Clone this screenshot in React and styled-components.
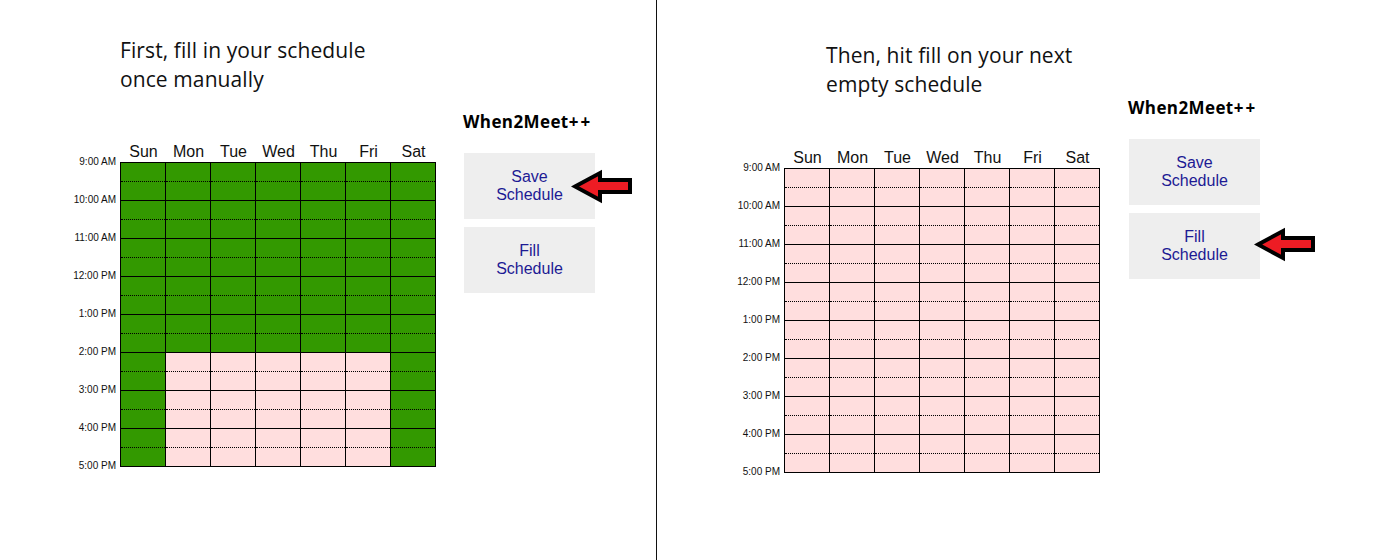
import React from "react";
import styled, { createGlobalStyle } from "styled-components";

const GlobalStyle = createGlobalStyle`
  html, body {
    margin: 0;
    padding: 0;
    background: #ffffff;
  }
  body {
    font-family: "Liberation Sans", Arial, sans-serif;
  }
`;

const Page = styled.div`
  display: flex;
  width: 1400px;
  height: 560px;
  overflow: hidden;
  background: #fff;
`;

const Half = styled.div`
  display: flex;
  align-items: flex-start;
  box-sizing: border-box;
  width: ${props => props.$width};
  flex-shrink: 0;
  padding-top: ${props => props.$top}px;
  padding-left: ${props => props.$left}px;
  border-right: ${props => (props.$divider ? "1px solid #111" : "none")};
`;

const Main = styled.div`
  display: flex;
  flex-direction: column;
`;

const Title = styled.div`
  font-family: "Open Sans", "Noto Sans", sans-serif;
  font-size: 21px;
  line-height: 29px;
  letter-spacing: 0.1px;
  color: #111;
  margin-left: ${props => props.$indent}px;
`;

const Schedule = styled.div`
  display: flex;
  margin-top: ${props => props.$gap}px;
`;

const TimeColumn = styled.div`
  display: flex;
  flex-direction: column;
  width: 56px;
  margin-right: 4px;
  padding-top: 1px;
`;

const TimeLabel = styled.div`
  height: 38px;
  line-height: 38px;
  font-size: 10px;
  text-align: right;
  color: #111;
  white-space: nowrap;
`;

const GridArea = styled.div`
  display: flex;
  flex-direction: column;
`;

const HeaderRow = styled.div`
  display: flex;
  height: 20px;
  padding-left: 1px;
`;

const DayName = styled.div`
  width: 45px;
  text-align: center;
  font-size: 16px;
  line-height: 20px;
  color: #111;
`;

const Grid = styled.div`
  display: flex;
  border-top: 1px solid #000;
  border-left: 1px solid #000;
  align-self: flex-start;
`;

const DayColumn = styled.div`
  display: flex;
  flex-direction: column;
  box-sizing: border-box;
  width: 45px;
  border-right: 1px solid #000;
`;

const Slot = styled.div`
  height: 19px;
  box-sizing: border-box;
  background: ${props => (props.$free ? "#339900" : "#ffdede")};
  border-bottom: 1px ${props => (props.$hourEnd ? "solid" : "dotted")} #000;
`;

const Side = styled.div`
  display: flex;
  flex-direction: column;
  margin-left: ${props => props.$left}px;
  margin-top: ${props => props.$top}px;
`;

const Brand = styled.div`
  font-family: "Open Sans", "Noto Sans", sans-serif;
  font-weight: 700;
  font-size: 17px;
  line-height: 24px;
  color: #000;
  letter-spacing: 0.4px;
  margin-left: -1px;
  margin-bottom: 19px;
`;

const Plus = styled.span`
  letter-spacing: 2px;
`;

const ButtonWrap = styled.div`
  position: relative;
  margin-bottom: 8px;
`;

const ActionButton = styled.button`
  display: block;
  width: 131px;
  height: 66px;
  border: none;
  padding: 0;
  background: #eeeeee;
  color: #1d1a94;
  font-family: "Liberation Sans", Arial, sans-serif;
  font-size: 16px;
  line-height: 18px;
  text-align: center;
`;

const Pointer = styled.svg`
  position: absolute;
  left: ${props => props.$left}px;
  top: ${props => props.$top}px;
`;

const DAYS = ["Sun", "Mon", "Tue", "Wed", "Thu", "Fri", "Sat"];
const TIMES = [
  "9:00 AM",
  "10:00 AM",
  "11:00 AM",
  "12:00 PM",
  "1:00 PM",
  "2:00 PM",
  "3:00 PM",
  "4:00 PM",
  "5:00 PM"
];

function Arrow({ left, top }) {
  return (
    <Pointer $left={left} $top={top} width="64" height="36" viewBox="0 0 64 36">
      <path
        d="M4 17.5 L29 4 L29 11 L59 11 L59 23 L29 23 L29 31 Z"
        fill="#ed1c24"
        stroke="#000"
        strokeWidth="4"
        strokeLinejoin="miter"
      />
    </Pointer>
  );
}

function WeekGrid({ isFree, gap }) {
  return (
    <Schedule $gap={gap}>
      <TimeColumn>
        {TIMES.map(t => (
          <TimeLabel key={t}>{t}</TimeLabel>
        ))}
      </TimeColumn>
      <GridArea>
        <HeaderRow>
          {DAYS.map(d => (
            <DayName key={d}>{d}</DayName>
          ))}
        </HeaderRow>
        <Grid>
          {DAYS.map((d, day) => (
            <DayColumn key={d}>
              {Array.from({ length: 16 }, (_, i) => (
                <Slot key={i} $hourEnd={i % 2 === 1} $free={isFree(day, i)} />
              ))}
            </DayColumn>
          ))}
        </Grid>
      </GridArea>
    </Schedule>
  );
}

function Sidebar({ left, top, arrowOn, arrowLeft, arrowTop }) {
  return (
    <Side $left={left} $top={top}>
      <Brand>
        When2Meet<Plus>++</Plus>
      </Brand>
      <ButtonWrap>
        <ActionButton>
          Save
          <br />
          Schedule
        </ActionButton>
        {arrowOn === "save" && <Arrow left={arrowLeft} top={arrowTop} />}
      </ButtonWrap>
      <ButtonWrap>
        <ActionButton>
          Fill
          <br />
          Schedule
        </ActionButton>
        {arrowOn === "fill" && <Arrow left={arrowLeft} top={arrowTop} />}
      </ButtonWrap>
    </Side>
  );
}

const filledWeek = (day, slot) => slot < 10 || day === 0 || day === 6;
const emptyWeek = () => false;

export default function App() {
  return (
    <Page>
      <GlobalStyle />
      <Half $width="657px" $top={36} $left={60} $divider>
        <Main>
          <Title $indent={60}>
            First, fill in your schedule
            <br />
            once manually
          </Title>
          <WeekGrid isFree={filledWeek} gap={48} />
        </Main>
        <Sidebar left={28} top={74} arrowOn="save" arrowLeft={107} arrowTop={16} />
      </Half>
      <Half $width="743px" $top={41} $left={67}>
        <Main>
          <Title $indent={102}>
            Then, hit fill on your next
            <br />
            empty schedule
          </Title>
          <WeekGrid isFree={emptyWeek} gap={49} />
        </Main>
        <Sidebar left={29} top={55} arrowOn="fill" arrowLeft={125} arrowTop={14} />
      </Half>
    </Page>
  );
}
